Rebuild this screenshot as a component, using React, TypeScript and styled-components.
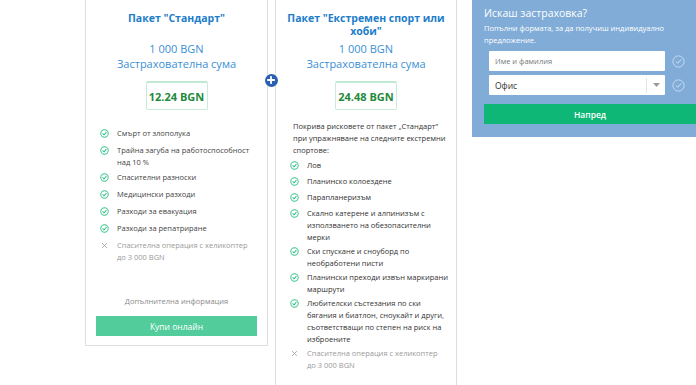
import React from "react";
import styled, { createGlobalStyle } from "styled-components";

const Global = createGlobalStyle`
  html, body { margin: 0; padding: 0; background: #ffffff; overflow: hidden; }
  body { font-family: "Open Sans", "Liberation Sans", sans-serif; width: 696px; height: 385px; }
  * { box-sizing: border-box; }
`;

const Page = styled.div`
  position: relative;
  display: flex;
  align-items: flex-start;
  padding-left: 85px;
  margin-top: -10px;
  width: 696px;
  height: 395px;
`;

const Card = styled.div<{ $h?: number; $w: number }>`
  width: ${(p) => p.$w}px;
  height: ${(p) => (p.$h ? `${p.$h}px` : "420px")};
  border: 1px solid #dedede;
  background: #fff;
  display: flex;
  flex-direction: column;
  align-items: stretch;
  padding-top: 21px;
`;

const Title = styled.div`
  font-size: 10.5px;
  font-weight: 700;
  line-height: 13px;
  color: #1c7dc9;
  text-align: center;
  min-height: 26px;
`;

const Amount = styled.div<{ $mt?: number }>`
  margin-top: ${(p) => p.$mt ?? 0}px;
  font-size: 11px;
  line-height: 15px;
  color: #3a8fd6;
  text-align: center;
`;

const PriceBox = styled.div`
  align-self: center;
  margin-top: 10px;
  width: 62px;
  height: 29px;
  border: 1px solid #c9ecd9;
  border-top: 2px solid #bfe9d3;
  border-radius: 2px;
  display: flex;
  align-items: center;
  justify-content: center;
  font-size: 11px;
  font-weight: 700;
  color: #1f8a3c;
`;

const Intro = styled.div`
  margin-top: 10px;
  padding: 0 14px 0 17px;
  font-size: 7.5px;
  line-height: 12px;
  color: #333;
  white-space: nowrap;
`;

const List = styled.ul<{ $mt: number; $gap: number }>`
  list-style: none;
  margin: ${(p) => p.$mt}px 0 0;
  padding: 0 8px 0 14px;
  display: flex;
  flex-direction: column;
  gap: ${(p) => p.$gap}px;
`;

const Item = styled.li<{ $off?: boolean; $dark?: boolean }>`
  display: flex;
  align-items: flex-start;
  gap: 5px;
  min-height: 14px;
  font-size: 7.5px;
  line-height: 12px;
  white-space: nowrap;
  color: ${(p) => (p.$off ? "#9a9a9a" : p.$dark ? "#333" : "#444")};
`;

const IconBox = styled.span`
  flex: 0 0 auto;
  width: 9px;
  height: 12px;
  display: flex;
  align-items: center;
  justify-content: center;
  margin-right: 3px;
`;

const Footer = styled.div`
  margin-top: auto;
  padding: 0 10px 9px;
  display: flex;
  flex-direction: column;
  align-items: stretch;
`;

const MoreInfo = styled.div`
  font-size: 7.5px;
  line-height: 12px;
  color: #8a8a8a;
  text-align: center;
  margin-bottom: 9px;
`;

const BuyButton = styled.button`
  height: 20px;
  border: none;
  background: #52cc9b;
  color: #fff;
  font-family: "Open Sans", "Liberation Sans", sans-serif;
  font-size: 8.5px;
  padding: 0;
`;

const Spacer = styled.div<{ $w: number }>`
  flex: 0 0 ${(p) => p.$w}px;
`;

const PlusBadge = styled.div`
  position: absolute;
  left: 264.5px;
  top: 83.5px;
  width: 13px;
  height: 13px;
  border-radius: 50%;
  background: #2b5fb3;
  display: flex;
  align-items: center;
  justify-content: center;
`;

const Panel = styled.div`
  margin-left: 15px;
  margin-top: 10px;
  flex: 1 0 auto;
  height: 137px;
  background: #80acd7;
  padding: 5px 0 0 12px;
  color: #fff;
`;

const PanelTitle = styled.div`
  font-size: 10.5px;
  line-height: 16px;
  font-weight: 400;
`;

const PanelText = styled.div`
  margin-top: 1px;
  font-size: 7.5px;
  line-height: 12px;
  white-space: nowrap;
`;

const FieldRow = styled.div<{ $mt: number }>`
  margin-top: ${(p) => p.$mt}px;
  padding-left: 5px;
  display: flex;
  align-items: center;
  gap: 7px;
`;

const Field = styled.div`
  width: 176px;
  height: 20px;
  background: #fff;
  border-radius: 1px;
  display: flex;
  align-items: center;
  padding-left: 6px;
`;

const Placeholder = styled.span`
  font-size: 7.5px;
  color: #777;
`;

const SelectValue = styled.span`
  flex: 1;
  font-size: 8.5px;
  color: #333;
`;

const SelectCaret = styled.span`
  width: 19px;
  height: 15px;
  border-left: 1px solid #e4e4e4;
  display: flex;
  align-items: center;
  justify-content: center;
`;

const NextButton = styled.button`
  display: block;
  margin-top: 9px;
  width: 100%;
  height: 20px;
  border: none;
  background: #0fb777;
  color: #fff;
  font-family: "Open Sans", "Liberation Sans", sans-serif;
  font-size: 8.5px;
  font-weight: 600;
  padding: 0;
`;

const Check = () => (
  <svg width="9" height="9" viewBox="0 0 16 16">
    <circle cx="8" cy="8" r="6.6" fill="none" stroke="#3cc58d" strokeWidth="1.8" />
    <path d="M5 8.3 L7.2 10.4 L11 6" fill="none" stroke="#3cc58d" strokeWidth="1.8" strokeLinecap="round" strokeLinejoin="round" />
  </svg>
);

const Cross = () => (
  <svg width="7" height="7" viewBox="0 0 10 10">
    <path d="M2 2 L8 8 M8 2 L2 8" stroke="#a5a5a5" strokeWidth="1.3" strokeLinecap="round" />
  </svg>
);

const FieldCheck = () => (
  <svg width="13" height="13" viewBox="0 0 20 20">
    <circle cx="10" cy="10" r="8.6" fill="none" stroke="rgba(255,255,255,0.65)" strokeWidth="1.3" />
    <path d="M6.3 10.3 L8.8 12.6 L13.8 7.3" fill="none" stroke="rgba(255,255,255,0.75)" strokeWidth="1.4" strokeLinecap="round" strokeLinejoin="round" />
  </svg>
);

type Feature = { lines: string[]; off?: boolean };

const standard: Feature[] = [
  { lines: ["Смърт от злополука"] },
  { lines: ["Трайна загуба на работоспособност", "над 10 %"] },
  { lines: ["Спасителни разноски"] },
  { lines: ["Медицински разходи"] },
  { lines: ["Разходи за евакуация"] },
  { lines: ["Разходи за репатриране"] },
  { lines: ["Спасителна операция с хеликоптер", "до 3 000 BGN"], off: true },
];

const extreme: Feature[] = [
  { lines: ["Лов"] },
  { lines: ["Планинско колоездене"] },
  { lines: ["Парапланеризъм"] },
  { lines: ["Скално катерене и алпинизъм с", "използването на обезопасителни", "мерки"] },
  { lines: ["Ски спускане и сноуборд по", "необработени писти"] },
  { lines: ["Планински преходи извън маркирани", "маршрути"] },
  {
    lines: [
      "Любителски състезания по ски",
      "бягания и биатлон, сноукайт и други,",
      "съответстващи по степен на риск на",
      "изброените",
    ],
  },
  { lines: ["Спасителна операция с хеликоптер", "до 3 000 BGN"], off: true },
];

const Features = ({
  items,
  mt,
  gap,
  dark,
}: {
  items: Feature[];
  mt: number;
  gap: number;
  dark?: boolean;
}) => (
  <List $mt={mt} $gap={gap}>
    {items.map((f, i) => (
      <Item key={i} $off={f.off} $dark={dark}>
        <IconBox>{f.off ? <Cross /> : <Check />}</IconBox>
        <span>
          {f.lines.map((l, j) => (
            <React.Fragment key={j}>
              {j > 0 && <br />}
              {l}
            </React.Fragment>
          ))}
        </span>
      </Item>
    ))}
  </List>
);

export default function App() {
  return (
    <>
      <Global />
      <Page>
        <Card $w={183} $h={356}>
          <Title>Пакет "Стандарт"</Title>
          <Amount $mt={3}>1 000 BGN</Amount>
          <Amount>Застрахователна сума</Amount>
          <PriceBox>12.24 BGN</PriceBox>
          <Features items={standard} mt={17} gap={3} />
          <Footer>
            <MoreInfo>Допълнителна информация</MoreInfo>
            <BuyButton>Купи онлайн</BuyButton>
          </Footer>
        </Card>
        <Spacer $w={7} />
        <Card $w={182}>
          <Title>
            Пакет "Екстремен спорт или
            <br />
            хоби"
          </Title>
          <Amount $mt={3}>1 000 BGN</Amount>
          <Amount>Застрахователна сума</Amount>
          <PriceBox>24.48 BGN</PriceBox>
          <Intro>
            Покрива рисковете от пакет „Стандарт"
            <br />
            при упражняване на следните екстремни
            <br />
            спортове:
          </Intro>
          <Features items={extreme} mt={3} gap={2} dark />
        </Card>
        <Panel>
          <PanelTitle>Искаш застраховка?</PanelTitle>
          <PanelText>
            Попълни формата, за да получиш индивидуално
            <br />
            предложение.
          </PanelText>
          <FieldRow $mt={5}>
            <Field>
              <Placeholder>Име и фамилия</Placeholder>
            </Field>
            <FieldCheck />
          </FieldRow>
          <FieldRow $mt={4}>
            <Field>
              <SelectValue>Офис</SelectValue>
              <SelectCaret>
                <svg width="7" height="4" viewBox="0 0 7 4">
                  <path d="M0 0 L7 0 L3.5 4 Z" fill="#9a9a9a" />
                </svg>
              </SelectCaret>
            </Field>
            <FieldCheck />
          </FieldRow>
          <NextButton>Напред</NextButton>
        </Panel>
        <PlusBadge>
          <svg width="8" height="8" viewBox="0 0 8 8">
            <path d="M4 0.8 V7.2 M0.8 4 H7.2" stroke="#fff" strokeWidth="1.8" strokeLinecap="round" />
          </svg>
        </PlusBadge>
      </Page>
    </>
  );
}
